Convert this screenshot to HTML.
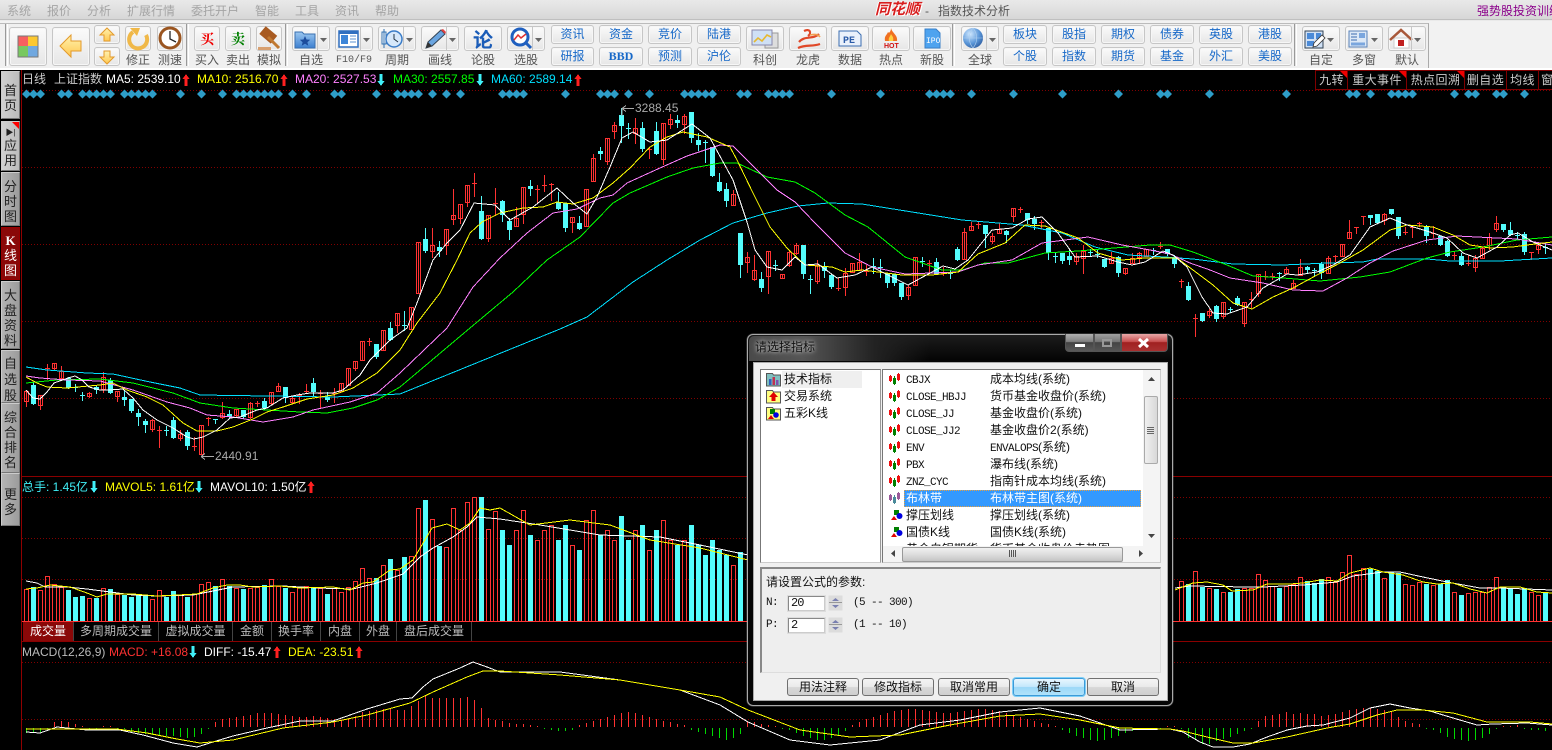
<!DOCTYPE html>
<html><head><meta charset="utf-8"><title>指数技术分析</title>
<style>
html,body{margin:0;padding:0;width:1552px;height:750px;overflow:hidden;background:#000}
body{position:relative;font:12px "Liberation Sans","WenQuanYi Zen Hei","Noto Sans CJK SC",sans-serif}
.t{position:absolute;white-space:nowrap;line-height:14px}
.b{position:absolute;box-sizing:border-box;border:1px solid #c6c6c6;border-radius:3px;background:linear-gradient(#fbfbfb,#e6e6e6);box-shadow:inset 0 0 0 1px #f6f6f6;text-align:center;color:#1668c8;line-height:17px;font-size:12px}
.l{position:absolute;top:53px;line-height:15px;font-size:12px;color:#555;text-align:center;white-space:nowrap;letter-spacing:0}
.s{position:absolute;left:1px;width:19px;box-sizing:border-box;text-align:center;font-size:13px;line-height:15px;color:#222;background:linear-gradient(90deg,#b4b4b4,#9c9c9c);border:1px solid #777;border-top-color:#ccc;border-left-color:#ccc}
.g{position:absolute;background:#e4e4e4;border-left:1px solid #999;border-right:1px solid #fff;top:24px;height:42px}
.tab{position:absolute;top:622px;height:19px;line-height:19px;text-align:center;color:#bbb;font-size:12px;box-sizing:border-box;border-right:1px solid #444}
.tr{position:absolute;top:70px;height:20px;line-height:19px;box-sizing:border-box;border:1px solid #800000;color:#ccc;font-size:12px;letter-spacing:.4px;text-align:center;white-space:nowrap;overflow:hidden;background:#000}
.c{position:absolute;width:0;height:0;border-top:7px solid #f00000;border-left:7px solid transparent;top:0;right:0}
i{font:11px "Liberation Mono",monospace;letter-spacing:-.6px}
.d{position:absolute;left:0;width:300px;height:17px;line-height:17px;font-size:12px;color:#111;white-space:nowrap}
.bt{position:absolute;top:678px;height:18px;box-sizing:border-box;border:1px solid #707070;border-radius:3px;background:linear-gradient(#f4f4f4 0,#ebebeb 48%,#d8d8d8 52%,#cfcfcf 100%);font-size:12px;line-height:16px;text-align:center;color:#111}
.mn{font:11px/14px "Liberation Mono",monospace;letter-spacing:-.6px;color:#111}
</style></head>
<body>
<!-- top menu -->
<div style="position:absolute;left:0;top:0;width:1552px;height:19px;background:linear-gradient(#e9e9e9,#d7d7d7)"></div>
<div class="t" style="left:7px;top:4px;color:#a4a4a4;word-spacing:0">系统</div>
<div class="t" style="left:47px;top:4px;color:#a4a4a4">报价</div>
<div class="t" style="left:87px;top:4px;color:#a4a4a4">分析</div>
<div class="t" style="left:127px;top:4px;color:#a4a4a4">扩展行情</div>
<div class="t" style="left:191px;top:4px;color:#a4a4a4">委托开户</div>
<div class="t" style="left:255px;top:4px;color:#a4a4a4">智能</div>
<div class="t" style="left:295px;top:4px;color:#a4a4a4">工具</div>
<div class="t" style="left:335px;top:4px;color:#a4a4a4">资讯</div>
<div class="t" style="left:375px;top:4px;color:#a4a4a4">帮助</div>
<div class="t" style="left:875px;top:3px;width:46px;color:#d81e1e;font-weight:bold;font-style:italic;font-size:15px;text-shadow:1px 1px 0 #fff,-1px 0 0 #fff;letter-spacing:0">同花顺</div>
<div class="t" style="left:925px;top:4px;color:#555;font-size:12px">-</div>
<div class="t" style="left:938px;top:4px;color:#555;font-size:12px">指数技术分析</div>
<div class="t" style="left:1477px;top:4px;color:#8b008b;font-size:12px">强势股投资训练</div>
<!-- toolbar -->
<div style="position:absolute;left:0;top:19px;width:1552px;height:2px;background:linear-gradient(#aaa,#fff)"></div>
<div style="position:absolute;left:0;top:21px;width:1552px;height:49px;background:#f2f2f2"></div>
<div style="position:absolute;left:0;top:23px;width:1428px;height:45px;background:#f0f0f0;border-top:1px solid #bbb;border-bottom:1px solid #aaa;border-right:1px solid #aaa"></div>
<div style="position:absolute;left:0;top:68px;width:1552px;height:2px;background:#fff"></div>
<div class="g" style="left:5px;width:1px"></div><div class="g" style="left:186px;width:1px"></div><div class="g" style="left:285px;width:1px"></div><div class="g" style="left:952px;width:1px"></div><div class="g" style="left:1294px;width:1px"></div>

<div class="b" style="left:9px;top:27px;width:38px;height:39px"></div>
<div class="b" style="left:52px;top:27px;width:38px;height:39px"></div>
<div class="b" style="left:94px;top:25px;width:26px;height:19px"></div>
<div class="b" style="left:94px;top:47px;width:26px;height:19px"></div>
<div class="b" style="left:125px;top:26px;width:26px;height:25px"></div><div class="l" style="left:125px;width:26px">修正</div>
<div class="b" style="left:157px;top:26px;width:26px;height:25px"></div><div class="l" style="left:157px;width:26px">测速</div>
<div class="b" style="left:194px;top:26px;width:26px;height:25px"></div><div class="l" style="left:194px;width:26px">买入</div>
<div class="b" style="left:225px;top:26px;width:26px;height:25px"></div><div class="l" style="left:225px;width:26px">卖出</div>
<div class="b" style="left:256px;top:26px;width:26px;height:25px"></div><div class="l" style="left:256px;width:26px">模拟</div>
<div class="b" style="left:292px;top:26px;width:38px;height:25px"></div><div class="l" style="left:292px;width:38px">自选</div>
<div class="b" style="left:335px;top:26px;width:38px;height:25px"></div><div class="l" style="left:335px;width:38px;font:10px 'Liberation Mono',monospace;line-height:15px">F10/F9</div>
<div class="b" style="left:378px;top:26px;width:38px;height:25px"></div><div class="l" style="left:378px;width:38px">周期</div>
<div class="b" style="left:421px;top:26px;width:38px;height:25px"></div><div class="l" style="left:421px;width:38px">画线</div>
<div class="b" style="left:464px;top:26px;width:38px;height:25px"></div><div class="l" style="left:464px;width:38px">论股</div>
<div class="b" style="left:507px;top:26px;width:38px;height:25px"></div><div class="l" style="left:507px;width:38px">选股</div>
<div class="b" style="left:551px;top:25px;width:43px;height:19px">资讯</div><div class="b" style="left:551px;top:47px;width:43px;height:19px">研报</div>
<div class="b" style="left:599px;top:25px;width:44px;height:19px">资金</div><div class="b" style="left:599px;top:47px;width:44px;height:19px;font:bold 12px 'Liberation Serif',serif;line-height:17px">BBD</div>
<div class="b" style="left:648px;top:25px;width:44px;height:19px">竞价</div><div class="b" style="left:648px;top:47px;width:44px;height:19px">预测</div>
<div class="b" style="left:697px;top:25px;width:44px;height:19px">陆港</div><div class="b" style="left:697px;top:47px;width:44px;height:19px">沪伦</div>
<div class="b" style="left:746px;top:26px;width:38px;height:25px"></div><div class="l" style="left:746px;width:38px">科创</div>
<div class="b" style="left:789px;top:26px;width:38px;height:25px"></div><div class="l" style="left:789px;width:38px">龙虎</div>
<div class="b" style="left:831px;top:26px;width:38px;height:25px"></div><div class="l" style="left:831px;width:38px">数据</div>
<div class="b" style="left:872px;top:26px;width:38px;height:25px"></div><div class="l" style="left:872px;width:38px">热点</div>
<div class="b" style="left:913px;top:26px;width:38px;height:25px"></div><div class="l" style="left:913px;width:38px">新股</div>
<div class="b" style="left:961px;top:26px;width:38px;height:25px"></div><div class="l" style="left:961px;width:38px">全球</div>
<div class="b" style="left:1003px;top:25px;width:44px;height:19px">板块</div><div class="b" style="left:1003px;top:47px;width:44px;height:19px">个股</div>
<div class="b" style="left:1052px;top:25px;width:44px;height:19px">股指</div><div class="b" style="left:1052px;top:47px;width:44px;height:19px">指数</div>
<div class="b" style="left:1101px;top:25px;width:44px;height:19px">期权</div><div class="b" style="left:1101px;top:47px;width:44px;height:19px">期货</div>
<div class="b" style="left:1150px;top:25px;width:44px;height:19px">债券</div><div class="b" style="left:1150px;top:47px;width:44px;height:19px">基金</div>
<div class="b" style="left:1199px;top:25px;width:44px;height:19px">英股</div><div class="b" style="left:1199px;top:47px;width:44px;height:19px">外汇</div>
<div class="b" style="left:1248px;top:25px;width:44px;height:19px">港股</div><div class="b" style="left:1248px;top:47px;width:44px;height:19px">美股</div>
<div class="b" style="left:1302px;top:26px;width:38px;height:25px"></div><div class="l" style="left:1302px;width:38px">自定</div>
<div class="b" style="left:1345px;top:26px;width:38px;height:25px"></div><div class="l" style="left:1345px;width:38px">多窗</div>
<div class="b" style="left:1388px;top:26px;width:38px;height:25px"></div><div class="l" style="left:1388px;width:38px">默认</div>

<svg width="1552" height="70" style="position:absolute;left:0;top:0">
<defs>
<linearGradient id="yl" x1="0" y1="0" x2="0" y2="1"><stop offset="0" stop-color="#fff2b0"/><stop offset="1" stop-color="#ffc850"/></linearGradient>
<linearGradient id="bl" x1="0" y1="0" x2="0" y2="1"><stop offset="0" stop-color="#9cc8f0"/><stop offset="1" stop-color="#3c7fd0"/></linearGradient>
<radialGradient id="gb" cx=".35" cy=".3" r=".8"><stop offset="0" stop-color="#d0e8ff"/><stop offset=".6" stop-color="#5a96d8"/><stop offset="1" stop-color="#2c5a9c"/></radialGradient>
</defs>
<!-- grid icon -->
<rect x="18" y="36" width="10" height="10" fill="#f66060"/><rect x="28" y="36" width="10" height="10" fill="#fcc830"/><rect x="18" y="46" width="10" height="11" fill="#78c860"/><rect x="28" y="46" width="10" height="11" fill="#70a8e0"/><rect x="18" y="36" width="20" height="21" fill="none" stroke="#777"/>
<path d="M60 46 71 35V41H81V51H71V57Z" fill="url(#yl)" stroke="#e39a2c"/>
<path d="M107 28 114 35H110V41H104V35H100Z" fill="url(#yl)" stroke="#e39a2c"/>
<path d="M107 64 100 57H104V51H110V57H114Z" fill="url(#yl)" stroke="#e39a2c"/>
<path d="M133 32A9 9 0 1 0 146 35" fill="none" stroke="#f0b848" stroke-width="4"/><path d="M130 28l10 0-3 8z" fill="#f0b848"/>
<circle cx="170" cy="38" r="10" fill="#fff" stroke="#9a5520" stroke-width="3"/><path d="M170 31V39L176 42" fill="none" stroke="#222" stroke-width="1.3"/>
<text x="200" y="44" font-size="14" font-weight="bold" font-family="Noto Serif CJK SC,serif" fill="#f00000">买</text><text x="231" y="44" font-size="14" font-weight="bold" font-family="Noto Serif CJK SC,serif" fill="#008000">卖</text>
<g transform="rotate(40 268 36)"><rect x="260" y="30" width="15" height="10" fill="#a85a20"/></g><path d="M268 37 279 48" stroke="#c07830" stroke-width="3"/><rect x="258" y="47" width="13" height="3" fill="#d8a070"/>
<path d="M295 32h7l2 2h11v14h-20z" fill="url(#bl)" stroke="#3a70b0"/><path d="M305 36l1.5 3.5 3.7.3-2.8 2.4.9 3.6-3.3-2-3.3 2 .9-3.6-2.8-2.4 3.7-.3z" fill="#1c4c9c"/>
<path d="M320 38h7l-3.5 4z" fill="#666"/><path d="M317.5 26V51" stroke="#c6c6c6"/>
<rect x="339" y="31" width="19" height="16" fill="#fff" stroke="#2f6fc0" stroke-width="1.5"/><rect x="341" y="35" width="7" height="9" fill="#3c85d8"/><path d="M350 36h6M350 39h6M350 42h6" stroke="#5a90d0"/><rect x="339" y="31" width="19" height="3" fill="#2f6fc0"/>
<path d="M363 38h7l-3.5 4z" fill="#666"/><path d="M360.5 26V51" stroke="#c6c6c6"/>
<rect x="382" y="32" width="4" height="12" fill="#fff" stroke="#3070b0"/><path d="M384 29V48" stroke="#3070b0"/><circle cx="394" cy="39" r="8" fill="#d6e8fa" stroke="#3a7cc8" stroke-width="1.5"/><path d="M394 34V39L398 42" fill="none" stroke="#234" />
<path d="M406 38h7l-3.5 4z" fill="#666"/><path d="M403.5 26V51" stroke="#c6c6c6"/>
<path d="M426 48l2-6 13-12 4 4-13 12z" fill="#6aa5e0" stroke="#345"/><path d="M441 30l4 4 1-2-3-3z" fill="#e04040"/><path d="M426 48l2-6 4 4z" fill="#333"/>
<path d="M449 38h7l-3.5 4z" fill="#666"/><path d="M446.5 26V51" stroke="#c6c6c6"/>
<text x="473" y="47" font-size="20" font-weight="bold" fill="#1a5cb8">论</text>
<circle cx="520" cy="37" r="8" fill="#fff" stroke="#1f5fbf" stroke-width="3"/><path d="M514 40 518 35 521 38 526 34" fill="none" stroke="#e03030" stroke-width="1.5"/><path d="M526 43 531 48" stroke="#1f5fbf" stroke-width="3"/>
<path d="M535 38h7l-3.5 4z" fill="#666"/><path d="M532.5 26V51" stroke="#c6c6c6"/>
<rect x="765" y="33" width="13" height="15" fill="#ddd" stroke="#999"/><rect x="752" y="30" width="20" height="15" fill="#cfe0f5" stroke="#88a"/><path d="M754 42 758 38 762 41 767 35 771 37" fill="none" stroke="#e6b830" stroke-width="1.6"/>
<path d="M799 42c6-7 14-2 20-8M804 31c6-3 8 2 4 5M798 48c8-4 14-1 22-4" fill="none" stroke="#e04828" stroke-width="2.2"/><path d="M810 35c4-1 8-1 10 2" fill="none" stroke="#f0a050" stroke-width="1.6"/>
<path d="M839 31h18l4 4v11h-22z" fill="#eaf1fb" stroke="#3b6db0"/><text x="843" y="43" font-size="10" font-weight="bold" font-family="Liberation Mono" fill="#2c5ca8">PE</text>
<path d="M891 28c1 5 7 7 6 13h-12c-1-5 2-6 3-9 1 2 3-1 3-4z" fill="#f07020"/><path d="M891 34c1 2 3 3 2 7h-4c-1-3 1-4 2-7z" fill="#ffd040"/><text x="884" y="48" font-size="7" font-weight="bold" fill="#d01010">HOT</text>
<path d="M925 29h11l4 4v15h-15z" fill="#4ea3ef" stroke="#3a80c8"/><text x="926" y="43" font-size="8" font-family="Liberation Mono" fill="#fff">IPO</text>
<circle cx="973" cy="38" r="10" fill="url(#gb)"/><path d="M963 38h20M973 28c-5 6-5 14 0 20M973 28c5 6 5 14 0 20" fill="none" stroke="#b0d0f0" stroke-width=".6"/>
<path d="M989 38h7l-3.5 4z" fill="#666"/><path d="M986.5 26V51" stroke="#c6c6c6"/>
<rect x="1305" y="31" width="18" height="17" fill="#cfe0f5" stroke="#345"/><rect x="1307" y="33" width="7" height="6" fill="#4a8ad8"/><rect x="1316" y="33" width="5" height="6" fill="#4a8ad8"/><rect x="1307" y="41" width="7" height="5" fill="#4a8ad8"/><path d="M1313 47l1-4 8-8 3 3-8 8z" fill="#fff" stroke="#333" stroke-width=".8"/>
<path d="M1327 38h7l-3.5 4z" fill="#666"/>
<rect x="1349" y="31" width="18" height="16" fill="#dce8f6" stroke="#5a82b8"/><path d="M1351 34h6M1351 37h6M1351 40h6" stroke="#3c6cb0"/><rect x="1359" y="33" width="6" height="5" fill="#7aa6de"/><path d="M1351 44h14" stroke="#7aa6de" stroke-width="3"/>
<path d="M1371 38h7l-3.5 4z" fill="#666"/>
<rect x="1394" y="38" width="15" height="10" fill="#fff" stroke="#ccc"/><path d="M1390 40l11-10 11 10" fill="none" stroke="#a8583a" stroke-width="2.5"/><rect x="1398" y="40" width="6" height="6" fill="#c02020"/>
<path d="M1414 38h7l-3.5 4z" fill="#666"/><path d="M1411.5 26V51" stroke="#c6c6c6"/>
</svg>

<!-- chart -->
<svg id="ch" width="1552" height="680" viewBox="0 70 1552 680" style="position:absolute;left:0;top:70px;shape-rendering:crispEdges" fill="none">
<path d="M21.5 70V750" stroke="#900000"/>
<path d="M22 90.5H1552M22 167.5H1552M22 244.5H1552M22 321.5H1552M22 398.5H1552M22 497.5H1552M22 538.5H1552M22 579.5H1552M22 662.5H1552M22 719.5H1552" stroke="#800000" stroke-dasharray="1 2"/>
<path d="M22 476.5H1552M22 641.5H1552" stroke="#8a0000"/>
<path d="M22 621.5H1552" stroke="#ff3232"/>
<g id="cd"></g>
<polyline stroke="#00e0ff" points="26,367 47,370 87,373 113,374 150,382 180,388 200,395 267,396 333,397 400,394 560,329 587,317 633,282 667,260 700,240 733,223 767,213 798,206 828,203 862,204 912,212 962,220 1022,225 1062,233 1095,247 1128,255 1165,257 1193,259 1233,264 1283,265 1327,263 1363,262 1377,259 1427,259 1450,261 1500,261 1552,258"/>
<polyline stroke="#00ff00" points="26,383 57,380 100,379 133,383 173,393 200,403 233,408 267,410 300,412 327,413 353,408 377,400 400,387 470,328 513,292 547,260 580,237 613,203 630,193 667,177 693,168 720,163 737,163 767,177 795,182 815,193 845,215 868,227 905,257 942,270 962,270 985,263 1008,263 1045,253 1078,251 1150,245 1170,245 1193,252 1227,265 1253,276 1283,278 1320,281 1360,277 1390,272 1427,258 1450,252 1483,247 1517,240 1552,237"/>
<polyline stroke="#ff80ff" points="26,376 40,378 67,380 100,381 133,390 167,402 190,408 207,415 233,417 263,422 293,417 313,410 350,402 377,393 400,373 447,328 473,287 500,258 527,233 553,213 577,209 600,198 613,195 627,183 660,168 687,156 720,145 733,146 757,170 777,190 795,202 815,223 845,253 872,267 905,274 958,272 978,265 1012,260 1042,243 1088,237 1122,245 1150,250 1170,254 1190,263 1210,270 1230,278 1263,283 1293,290 1323,291 1347,278 1370,263 1393,251 1427,240 1457,236 1517,239 1552,245"/>
<polyline stroke="#ffff00" points="26,377 37,383 47,387 67,388 100,385 113,383 127,390 147,397 163,405 183,423 197,431 217,431 233,427 253,419 267,412 283,407 307,399 333,395 353,388 377,373 400,350 417,323 440,293 457,260 470,233 482,222 500,213 523,208 543,207 557,202 573,204 593,198 613,183 630,168 650,147 667,137 683,132 707,137 730,147 737,160 753,193 770,227 787,248 805,265 832,267 845,272 862,270 902,275 932,275 958,272 978,254 1005,243 1025,225 1045,226 1078,238 1098,253 1122,260 1145,258 1177,258 1193,270 1213,285 1233,303 1252,309 1273,297 1293,288 1317,275 1340,263 1363,250 1390,230 1407,225 1433,227 1453,235 1470,245 1490,248 1513,247 1527,245 1552,242"/>
<polyline stroke="#ffffff" points="26,390 33,398 40,399 47,392 54,383 68,378 75,376 82,380 89,387 100,390 110,390 123,389 133,398 143,410 157,420 173,428 187,437 194,439 203,437 217,430 230,418 240,417 257,410 267,408 283,398 297,395 310,393 333,393 343,390 360,375 370,360 383,347 390,340 407,328 417,303 433,260 447,243 460,230 474,203 495,205 510,220 533,207 557,188 573,203 587,214 597,197 610,167 622,138 633,132 650,142 667,140 692,124 710,138 733,180 747,222 755,250 767,267 782,270 795,257 805,265 818,264 837,278 855,275 872,267 892,277 908,285 932,272 943,266 955,269 968,260 992,230 1012,228 1028,219 1042,217 1058,233 1075,257 1098,256 1118,262 1132,265 1145,262 1163,251 1173,255 1187,267 1202,297 1213,313 1227,314 1247,307 1263,288 1287,274 1297,275 1317,272 1333,265 1350,255 1370,227 1390,218 1407,225 1430,232 1447,238 1463,253 1477,258 1497,247 1510,235 1518,233 1533,242 1552,250"/>
<!-- volume averages -->
<polyline stroke="#ffffff" points="26,581 37,583 45,587 67,587 87,589 110,592 133,595 157,596 193,595 213,591 233,587 283,586 317,588 353,589 377,583 403,574 420,557 433,548 453,537 467,527 477,517 500,519 540,525 600,535 660,537 700,545 748,555"/>
<polyline stroke="#ffff00" points="26,589 37,588 50,585 70,587 87,593 97,597 107,594 133,594 157,596 197,594 213,588 227,585 240,585 253,587 280,586 300,588 333,587 350,590 363,583 373,582 390,570 400,569 413,560 432,528 447,524 460,530 470,523 480,508 490,510 500,508 530,525 570,520 610,525 650,540 700,548 748,560"/>
<polyline stroke="#ffffff" points="1175,588 1190,586 1247,587 1263,587 1303,585 1337,582 1353,576 1383,572 1400,572 1423,577 1447,582 1480,588 1500,588 1552,590"/>
<polyline stroke="#ffff00" points="1175,590 1180,588 1193,583 1207,582 1223,585 1232,591 1253,590 1267,584 1290,584 1303,583 1320,580 1337,581 1350,573 1370,568 1383,572 1403,575 1423,582 1437,584 1453,583 1470,589 1487,593 1500,587 1520,587 1537,592 1552,593"/>
<!-- MACD lines -->
<polyline stroke="#ffffff" points="26,732 40,733 57,727 87,730 120,730 143,735 173,743 197,747 213,742 233,736 267,728 300,721 333,721 367,709 400,699 412,698 423,687 433,679 460,668 473,662 487,667 500,672 560,672 620,680 680,690 720,705 748,722 790,740 830,745 880,740 920,725 960,720 1000,712 1040,708 1080,716 1120,730 1170,729 1183,732 1200,742 1213,747 1233,747 1250,744 1267,737 1287,730 1307,726 1323,725 1350,718 1370,708 1390,704 1410,708 1430,711 1453,718 1477,725 1493,724 1527,723 1552,725"/>
<polyline stroke="#ffff00" points="26,729 63,729 117,729 147,733 177,739 200,743 233,740 283,728 333,722 367,715 410,703 433,692 467,677 483,671 500,671 560,675 620,680 680,690 720,697 748,710 800,730 850,737 900,735 950,725 1000,716 1040,714 1080,720 1120,728 1170,729 1183,731 1207,737 1233,743 1253,743 1287,737 1327,728 1350,724 1377,715 1397,710 1423,710 1453,713 1487,722 1530,722 1552,724"/>
<!-- header arrows -->
<g fill="#ff2020" stroke="none">
<path d="M186 74l3.500 5h-2v7h-3v-7h-2z"/><path d="M284 74l3.500 5h-2v7h-3v-7h-2z"/><path d="M578 74l3.500 5h-2v7h-3v-7h-2z"/>
<path d="M311 481l3.500 5h-2v7h-3v-7h-2z"/><path d="M277 646l3.500 5h-2v7h-3v-7h-2z"/><path d="M359 646l3.500 5h-2v7h-3v-7h-2z"/>
</g>
<g fill="#40f0f8" stroke="none">
<path d="M381 86l-3.500-5h2v-7h3v7h2z"/><path d="M480 86l-3.500-5h2v-7h3v7h2z"/><path d="M94 493l-3.500-5h2v-7h3v7h2z"/><path d="M199 493l-3.500-5h2v-7h3v7h2z"/><path d="M193 658l-3.500-5h2v-7h3v7h2z"/>
</g>
<path d="M622 108.500H634M622 108.500l4-3M622 108.500l4 3M622 108V116" stroke="#aaa"/>
<path d="M201 456.500H214M201 456.500l4-3M201 456.500l4 3" stroke="#aaa"/>
</svg>

<!-- chart header text -->
<div class="t" style="left:22px;top:72px;color:#ccc;font-size:12px">日线</div>
<div class="t" style="left:54px;top:72px;color:#ccc;font-size:12px">上证指数</div>
<div class="t" style="left:106px;top:72px;color:#fff">MA5: 2539.10</div>
<div class="t" style="left:197px;top:72px;color:#ff0">MA10: 2516.70</div>
<div class="t" style="left:295px;top:72px;color:#ff80ff">MA20: 2527.53</div>
<div class="t" style="left:393px;top:72px;color:#0f0">MA30: 2557.85</div>
<div class="t" style="left:491px;top:72px;color:#00e0ff">MA60: 2589.14</div>
<div class="t" style="left:635px;top:101px;color:#aaa">3288.45</div>
<div class="t" style="left:215px;top:449px;color:#aaa">2440.91</div>
<div class="t" style="left:22px;top:480px;color:#40f0f8">总手: 1.45亿</div>
<div class="t" style="left:105px;top:480px;color:#ff0">MAVOL5: 1.61亿</div>
<div class="t" style="left:210px;top:480px;color:#fff">MAVOL10: 1.50亿</div>
<div class="t" style="left:22px;top:645px;color:#bbb">MACD(12,26,9)</div>
<div class="t" style="left:109px;top:645px;color:#ff3232">MACD: +16.08</div>
<div class="t" style="left:204px;top:645px;color:#fff">DIFF: -15.47</div>
<div class="t" style="left:288px;top:645px;color:#ff0">DEA: -23.51</div>

<!-- right tabs -->
<div class="tr" style="left:1315px;width:33px">九转<span class="c"></span></div>
<div class="tr" style="left:1347px;width:60px">重大事件<span class="c"></span></div>
<div class="tr" style="left:1406px;width:59px">热点回溯<span class="c"></span></div>
<div class="tr" style="left:1464px;width:43px">删自选</div>
<div class="tr" style="left:1506px;width:33px">均线</div>
<div class="tr" style="left:1538px;width:30px;text-align:left;padding-left:2px">窗口</div>

<!-- sidebar -->
<div class="s" style="top:71px;height:48px;padding-top:11px;background:linear-gradient(90deg,#d0d0d0,#bcbcbc)">首<br>页</div>
<div class="s" style="top:121px;height:50px;padding-top:5px;background:linear-gradient(90deg,#d0d0d0,#bcbcbc)"><span style="font-size:8px;line-height:11px;display:block">&#9654;|</span>应<br>用<span style="position:absolute;right:0;top:0;border-top:7px solid #f00;border-left:7px solid transparent"></span></div>
<div class="s" style="top:172px;height:54px;padding-top:6px">分<br>时<br>图</div>
<div class="s" style="top:227px;height:53px;padding-top:5px;background:#8a0808;color:#fff;border-color:#900"><b style="font-family:'Liberation Serif',serif">K</b><br>线<br>图</div>
<div class="s" style="top:281px;height:68px;padding-top:6px">大<br>盘<br>资<br>料</div>
<div class="s" style="top:350px;height:53px;padding-top:5px;line-height:16px">自<br>选<br>股</div>
<div class="s" style="top:403px;height:70px;padding-top:6px">综<br>合<br>排<br>名</div>
<div class="s" style="top:473px;height:53px;padding-top:13px">更<br>多</div>

<!-- volume tabs -->
<div class="tab" style="left:23px;width:51px;background:#8a0808;color:#fff">成交量</div>
<div class="tab" style="left:74px;width:85px">多周期成交量</div>
<div class="tab" style="left:159px;width:74px">虚拟成交量</div>
<div class="tab" style="left:233px;width:39px">金额</div>
<div class="tab" style="left:272px;width:49px">换手率</div>
<div class="tab" style="left:321px;width:39px">内盘</div>
<div class="tab" style="left:360px;width:37px">外盘</div>
<div class="tab" style="left:397px;width:75px">盘后成交量</div>

<!-- dialog -->
<div style="position:absolute;left:747px;top:334px;width:426px;height:372px;box-sizing:border-box;border:1px solid #aaa;border-radius:6px;background:linear-gradient(#1c1c1c,#050505 25px,#050505 100%);box-shadow:0 0 1px #fff"></div>
<div style="position:absolute;left:749px;top:336px;width:180px;height:25px;background:linear-gradient(90deg,#4a4a4a,#555 30%,#222 70%,transparent);border-radius:5px 0 0 0"></div>
<div class="t" style="left:755px;top:340px;color:#111;font-size:12px;text-shadow:0 0 6px #bbb,0 0 3px #bbb">请选择指标</div>
<div style="position:absolute;left:1065px;top:334px;width:29px;height:18px;box-sizing:border-box;border:1px solid #555;border-top:0;border-radius:0 0 0 4px;background:linear-gradient(#b0b0b0,#808080 45%,#444 50%,#5a5a5a)"></div>
<div style="position:absolute;left:1075px;top:344px;width:10px;height:3px;background:#fff"></div>
<div style="position:absolute;left:1094px;top:334px;width:27px;height:18px;box-sizing:border-box;border:1px solid #555;border-top:0;background:linear-gradient(#a0a0a0,#777 45%,#444 50%,#555)"></div>
<div style="position:absolute;left:1102px;top:339px;width:10px;height:8px;box-sizing:border-box;border:2px solid #999"></div>
<div style="position:absolute;left:1121px;top:334px;width:47px;height:18px;box-sizing:border-box;border:1px solid #555;border-top:0;border-radius:0 0 4px 0;background:linear-gradient(#e8a8a8,#c85050 45%,#a02020 50%,#a83030)"></div>
<svg width="14" height="12" style="position:absolute;left:1137px;top:337px"><path d="M2 2 11 10M11 2 2 10" stroke="#fff" stroke-width="3"/></svg>
<div style="position:absolute;left:753px;top:362px;width:415px;height:339px;box-sizing:border-box;border:1px solid #aaa;background:#f0f0f0"></div>

<!-- tree box -->
<div style="position:absolute;left:760px;top:369px;width:121px;height:194px;box-sizing:border-box;border:1px solid #777;border-right-color:#999;border-bottom-color:#ccc;background:#fff"></div>
<div style="position:absolute;left:782px;top:371px;width:80px;height:17px;background:#efefef"></div>
<div class="t" style="left:784px;top:372px;font-size:12px;color:#111">技术指标</div>
<div class="t" style="left:784px;top:389px;font-size:12px;color:#111">交易系统</div>
<div class="t" style="left:784px;top:406px;font-size:12px;color:#111">五彩K线</div>
<svg width="18" height="52" style="position:absolute;left:765px;top:370px">
<path d="M1.500 3.500h6l1 1.500h7v11h-14z" fill="#7fc0c0" stroke="#555"/><rect x="4" y="9" width="2.500" height="6" fill="#3060c0"/><rect x="7.500" y="7" width="2.500" height="8" fill="#c03050"/><rect x="11" y="10" width="2.500" height="5" fill="#8050b0"/>
<path d="M1.500 20.500h6l1 1.500h7v11h-14z" fill="#ffff80" stroke="#555"/><path d="M8.500 22 13 27h-2.500v4h-4v-4H4z" fill="#e00000"/>
<path d="M1.500 37.500h6l1 1.500h7v11h-14z" fill="#ffff80" stroke="#555"/><rect x="5" y="39" width="5" height="5" fill="#008000"/><circle cx="11" cy="45" r="2.800" fill="#0000e0"/><path d="M3 49l3-4 3 4z" fill="#e00000"/>
</svg>

<!-- list box -->
<div style="position:absolute;left:882px;top:369px;width:279px;height:194px;box-sizing:border-box;border:1px solid #777;border-right-color:#ccc;border-bottom-color:#ccc;background:#fff"></div>
<div style="position:absolute;left:883px;top:370px;width:260px;height:176px;overflow:hidden">
<div style="position:absolute;left:21px;top:120px;width:237px;height:17px;box-sizing:border-box;background:#3399ff;border:1px dotted #e8a040"></div>
<div class="d" style="top:1px"><span style="position:absolute;left:23px"><i>CBJX</i></span><span style="position:absolute;left:107px">成本均线(系统)</span></div>
<div class="d" style="top:18px"><span style="position:absolute;left:23px"><i>CLOSE_HBJJ</i></span><span style="position:absolute;left:107px">货币基金收盘价(系统)</span></div>
<div class="d" style="top:35px"><span style="position:absolute;left:23px"><i>CLOSE_JJ</i></span><span style="position:absolute;left:107px">基金收盘价(系统)</span></div>
<div class="d" style="top:52px"><span style="position:absolute;left:23px"><i>CLOSE_JJ2</i></span><span style="position:absolute;left:107px">基金收盘价2(系统)</span></div>
<div class="d" style="top:69px"><span style="position:absolute;left:23px"><i>ENV</i></span><span style="position:absolute;left:107px"><i>ENVALOPS</i>(系统)</span></div>
<div class="d" style="top:86px"><span style="position:absolute;left:23px"><i>PBX</i></span><span style="position:absolute;left:107px">瀑布线(系统)</span></div>
<div class="d" style="top:103px"><span style="position:absolute;left:23px"><i>ZNZ_CYC</i></span><span style="position:absolute;left:107px">指南针成本均线(系统)</span></div>
<div class="d" style="top:120px;color:#fff"><span style="position:absolute;left:23px">布林带</span><span style="position:absolute;left:107px">布林带主图(系统)</span></div>
<div class="d" style="top:137px"><span style="position:absolute;left:23px">撑压划线</span><span style="position:absolute;left:107px">撑压划线(系统)</span></div>
<div class="d" style="top:154px"><span style="position:absolute;left:23px">国债K线</span><span style="position:absolute;left:107px">国债K线(系统)</span></div>
<div class="d" style="top:171px"><span style="position:absolute;left:23px">黄金白银期货</span><span style="position:absolute;left:107px">货币基金收盘价走势图</span></div>
<svg width="20" height="176" style="position:absolute;left:5px;top:0">
<defs><g id="k"><path d="M2.500 2V9" stroke="#e01010"/><rect x="1" y="3" width="3" height="5" fill="#f01010"/><path d="M6.500 3V12" stroke="#008000"/><rect x="5" y="5" width="3" height="6" fill="#008000"/><path d="M10.500 0V8" stroke="#e01010"/><rect x="9" y="1" width="3" height="6" fill="#f01010"/></g>
<g id="m"><rect x="6" y="0" width="5" height="5" fill="#008000"/><circle cx="11.500" cy="6" r="3" fill="#0000e0"/><path d="M3 10l3-4 3 4z" fill="#e00000"/></g></defs>
<use href="#k" y="3"/><use href="#k" y="20"/><use href="#k" y="37"/><use href="#k" y="54"/><use href="#k" y="71"/><use href="#k" y="88"/><use href="#k" y="105"/>
<g transform="translate(0 122)"><path d="M2.500 2V9M10.500 0V8" stroke="#9a5a9a"/><rect x="1" y="3" width="3" height="5" fill="#9a5a9a"/><path d="M6.500 3V12" stroke="#4a8a9a"/><rect x="5" y="5" width="3" height="6" fill="#4a8a9a"/><rect x="9" y="1" width="3" height="6" fill="#9a5a9a"/></g>
<use href="#m" y="140"/><use href="#m" y="157"/>
</svg>
</div>
<!-- scrollbars -->
<div style="position:absolute;left:1143px;top:370px;width:17px;height:176px;background:#f4f4f4"></div>
<svg width="17" height="192" style="position:absolute;left:1143px;top:370px"><path d="M5 11h7l-3.500-4z" fill="#444"/><path d="M5 164h7l-3.500 4z" fill="#444"/></svg>
<div style="position:absolute;left:1144px;top:396px;width:14px;height:68px;box-sizing:border-box;border:1px solid #aaa;border-radius:2px;background:linear-gradient(90deg,#f0f0f0,#d8d8d8)"></div>
<svg width="14" height="10" style="position:absolute;left:1144px;top:426px"><path d="M3 1.500h7M3 3.500h7M3 5.500h7M3 7.500h7" stroke="#666"/></svg>
<div style="position:absolute;left:883px;top:546px;width:277px;height:16px;background:#f4f4f4"></div>
<svg width="277" height="16" style="position:absolute;left:883px;top:546px"><path d="M12 4v7l-4-3.500z" fill="#444"/><path d="M256 4v7l4-3.500z" fill="#444"/></svg>
<div style="position:absolute;left:902px;top:547px;width:221px;height:15px;box-sizing:border-box;border:1px solid #999;border-radius:2px;background:linear-gradient(#f0f0f0,#ddd 50%,#c4c4c4)"></div>
<svg width="12" height="10" style="position:absolute;left:1007px;top:549px"><path d="M2.500 1v7M4.500 1v7M6.500 1v7M8.500 1v7" stroke="#555"/></svg>

<!-- params -->
<div style="position:absolute;left:760px;top:567px;width:401px;height:106px;box-sizing:border-box;border:1px solid #ddd;border-top:2px solid #888;border-left:2px solid #888;background:#eee"></div>
<div class="t" style="left:766px;top:575px;color:#111;font-size:12px">请设置公式的参数:</div>
<div class="t mn" style="left:766px;top:596px">N:</div>
<div style="position:absolute;left:788px;top:596px;width:37px;height:15px;box-sizing:border-box;border:1px solid #888;border-right-color:#ccc;border-bottom-color:#ccc;background:#fff;font:12px/13px 'Liberation Mono',monospace;letter-spacing:-1px;padding-left:2px;color:#111;outline:1px solid #ddd">20</div>
<svg width="16" height="16" style="position:absolute;left:828px;top:595px"><rect width="15" height="16" fill="#dcdcdc" stroke="#eee"/><path d="M4 6h7l-3.500-3z" fill="#7a80b0"/><path d="M4 10h7l-3.500 3z" fill="#7a80b0"/><path d="M1 7.500h13" stroke="#999"/></svg>
<div class="t mn" style="left:853px;top:596px">(5 -- 300)</div>
<div class="t mn" style="left:766px;top:618px">P:</div>
<div style="position:absolute;left:788px;top:618px;width:37px;height:15px;box-sizing:border-box;border:1px solid #888;border-right-color:#ccc;border-bottom-color:#ccc;background:#fff;font:12px/13px 'Liberation Mono',monospace;padding-left:2px;color:#111;outline:1px solid #ddd">2</div>
<svg width="16" height="16" style="position:absolute;left:828px;top:617px"><rect width="15" height="16" fill="#dcdcdc" stroke="#eee"/><path d="M4 6h7l-3.500-3z" fill="#7a80b0"/><path d="M4 10h7l-3.500 3z" fill="#7a80b0"/><path d="M1 7.500h13" stroke="#999"/></svg>
<div class="t mn" style="left:853px;top:618px">(1 -- 10)</div>

<div class="bt" style="left:787px;width:72px">用法注释</div>
<div class="bt" style="left:862px;width:72px">修改指标</div>
<div class="bt" style="left:938px;width:72px">取消常用</div>
<div class="bt" style="left:1013px;width:72px;border-color:#3c9ad8;background:linear-gradient(#e8f6fe,#c4e8fc 48%,#9cd8f8 52%,#b0e2fa);box-shadow:0 0 0 1px #7fd0f8">确定</div>
<div class="bt" style="left:1087px;width:72px">取消</div>

<script>
var D="r390,391,401,406 c382,385,404,404 r395,395,405,409 r364,368,370,379 r363,363,368,370 r366,371,378,380 c377,378,388,388 c384,387,388,391 c392,395,397,400 r392,393,396,397 c386,387,390,393 r372,377,389,392 c378,380,393,393 r391,391,396,401 c391,397,400,405 c399,399,411,412 c409,413,417,425 c419,421,425,432 r419,420,429,431 r426,430,431,447 c426,430,431,435 c417,420,438,438 r430,434,438,440 c430,432,446,449 r437,446,447,450 r425,425,454,454 r417,418,419,425 c419,419,421,423 r402,413,417,418 c410,414,417,418 r409,409,415,416 c410,410,417,418 r402,403,417,418 r401,403,404,406 c398,401,408,409 r392,392,403,404 r383,386,391,391 c387,387,398,402 r397,398,402,403 r393,395,397,403 r384,391,393,393 c378,383,392,395 r390,393,394,407 c392,397,400,401 r388,393,394,402 r383,383,391,391 r368,368,385,385 r361,361,368,370 r341,341,360,360 r338,341,343,345 c344,344,357,358 r330,330,350,350 c322,328,340,340 r313,313,325,332 c311,325,327,330 r307,307,329,329 r242,242,293,293 c228,239,251,252 r228,245,251,257 c241,247,251,256 r229,229,245,254 r189,215,219,224 r204,204,218,223 r185,185,202,206 r173,183,184,196 c196,211,239,239 r215,215,238,241 r188,203,205,215 c200,201,215,221 c218,221,230,239 r207,218,226,226 r187,187,214,223 c180,186,189,195 r185,189,191,203 r175,185,187,191 r183,184,185,200 c192,202,209,209 c203,203,228,231 r217,217,222,232 c216,223,229,229 r189,189,226,226 r154,158,181,181 c147,151,154,159 r138,138,161,164 r122,125,131,138 c108,115,126,142 c123,128,129,138 r118,128,133,143 c122,128,149,151 r147,149,150,158 c122,131,154,154 r123,123,159,164 r114,119,124,128 c115,120,123,127 r114,116,124,133 c112,112,138,142 c133,140,145,150 c140,142,143,162 c147,147,176,176 c173,182,191,191 c183,189,201,206 r190,194,205,205 c233,233,265,277 r252,257,262,272 r255,270,279,280 c272,279,288,291 r251,251,276,293 c260,265,266,270 r274,274,278,278 r251,252,265,266 r243,245,253,254 c245,245,274,278 c275,279,280,293 r260,265,281,283 c262,266,271,277 c274,275,287,288 r278,288,289,290 r268,273,287,295 r263,263,272,272 r253,262,270,270 r265,271,272,275 c258,266,267,273 c259,267,268,277 c273,273,283,287 c274,274,283,285 c283,283,297,299 r285,287,295,299 r257,257,285,285 c257,261,263,266 r260,263,264,273 c258,262,274,274 r267,273,274,275 c270,273,274,278 c247,249,260,260 r228,232,259,259 r222,226,230,230 r222,224,225,228 c225,225,234,247 r233,236,241,243 r223,229,233,233 c230,231,235,242 r208,208,216,221 r207,209,210,212 c213,213,220,223 c216,219,224,229 r220,222,224,228 c228,228,253,259 c253,256,257,262 c253,253,261,263 c250,256,260,264 r253,256,261,264 r245,251,258,273 c249,252,253,256 c249,254,255,257 c259,259,267,267 r252,258,263,263 c256,257,273,276 r268,268,273,274 r253,258,263,263 r252,253,257,263 r249,249,256,256 c248,250,251,254 r242,246,248,248 c249,249,254,255 c255,258,264,267 r279,281,282,287 c282,286,300,300 r314,318,319,336 c313,313,321,321 r309,311,315,317 c305,306,319,321 r302,302,316,318 c307,309,310,312 c296,298,305,305 r302,302,323,326 r292,299,301,307 r274,274,293,296 r271,276,277,279 r273,276,277,279 c272,273,274,280 r267,269,273,273 r280,283,288,288 r259,267,275,275 c266,267,270,272 c268,270,271,276 c262,264,273,278 r256,258,273,273 r255,256,257,261 r244,244,256,256 r220,232,238,238 r227,227,228,233 r216,216,217,224 c215,215,218,224 c214,214,223,223 r213,214,220,224 c209,209,214,214 c217,217,236,238 r227,232,233,234 r227,227,228,237 r222,223,224,226 c225,227,236,242 r226,233,235,237 c236,236,245,245 c240,241,256,256 r252,255,256,259 c253,256,265,265 r255,263,265,265 r255,258,267,271 r247,248,258,258 r233,237,245,249 r216,223,229,231 c224,224,230,231 c222,230,235,235 c232,235,236,238 c232,234,252,254 r252,252,253,259 r244,245,249,253 c243,247,249,253".split(" ");
var V1=[589,587,590,576,584,587,590,597,596,598,598,588,589,594,595,597,594,596,599,590,597,591,595,597,594,584,582,586,579,586,588,589,588,587,585,579,586,588,592,587,586,588,588,594,588,592,587,581,568,578,578,565,559,570,557,556,508,500,519,546,547,508,530,502,497,497,529,511,530,545,530,510,535,540,530,525,540,525,545,550,520,510,535,530,540,516,540,530,525,550,530,520,540,545,540,525,545,555,540,550,555,565,552];
var V2=[581,584,571,587,588,589,592,592,589,588,588,574,580,586,588,586,584,577,581,583,579,577,582,572,555,574,568,569,571,578,572,573,584,585,582,584,585,584,580,592,595,593,592,592,587,577,588,588,594,588,592,595,593];
var H=[-5,-5,-4,-1,5,6,5,3,1,-1,-1,1,1,-1,-1,-4,-5,-6,-7,-7,-8,-8,-9,-10,-9,-6,-1,5,8,9,10,11,12,14,14,14,13,12,11,10,10,11,10,9,8,7,8,11,15,16,17,18,19,17,17,21,26,31,29,29,29,29,29,30,27,19,9,7,6,4,3,3,2,1,-1,-2,-3,-3,-2,2,4,6,8,10,12,14,15,14,12,10,8,6,5,3,2,-2,-4,-6,-8,-10,-12,-10,-6,6,5,3,2,1,-1,-2,-5,-8,-10,-12,-12,-10,-7,-3,2,5,8,10,12,14,16,17,18,18,17,16,15,14,14,15,16,17,18,18,17,16,14,12,10,8,6,4,3,1,-2,-5,-8,-10,-12,-13,-12,-10,-8,-5,-3,-2,-1,-1,-1,1,1,-1,-10,-12,-16,-16,-13,-11,-9,-6,-3,-1,6,11,12,13,15,13,14,13,13,11,12,13,15,17,18,19,19,18,17,15,10,6,4,3,-1,-2,-5,-9,-11,-12,-13,-12,-10,-6,-1,1,1,2,-1,-2,-2,-3,-1];
var Dm=[0,1,2,5,6,8,9,10,11,12,14,15,16,17,18,22,25,28,30,31,32,33,34,35,36,38,40,44,45,50,53,54,55,56,58,60,62,68,69,70,71,77,82,83,84,86,89,94,95,96,97,98,102,103,106,107,108,109,115,122,129,130,131,132,135,141,148,156,162,163,169,180,189,190,192,195,196,197,198,204,206,207,210,211,214];
var rp="",cf="",cw="",cm="",dm="",hr="",hg="";
function X(i){return Math.round(26.33+7*i)+.5}
D.forEach(function(s,i){var t=s[0],a=s.slice(1).split(",").map(Number),x=X(i),h=a[0],o=a[1],b=a[2],l=a[3];
 var w="M"+x+" "+h+"V"+(l+1);
 if(t=="r"){rp+=w;if(b-o<=2)rp+="M"+(x-2.5)+" "+(o+.5)+"h5";else rp+="M"+(x-2)+" "+(o+.5)+"h4v"+(b-o)+"h-4z";}
 else{cw+=w;if(b-o<=2)cw+="M"+(x-2.5)+" "+(o+.5)+"h5";else cf+="M"+(x-2.5)+" "+o+"h5v"+(b-o)+"h-5z";}
 var v=i<V1.length?V1[i]:(i>=165&&i-165<V2.length?V2[i-165]:0);
 if(i==218)v=0;
 if(v){if(t=="r")rp+="M"+(x-2)+" "+(v+.5)+"h4V621.500h-4z";else cf+="M"+(x-2.5)+" "+v+"h5V621h-5z";}
 var q=H[i]||0;if(q>0)hr+="M"+x+" 727V"+(727-q);else if(q<0)hg+="M"+x+" 728V"+(728-q);
});
Dm.forEach(function(i){var x=X(i);dm+="M"+x+" 89.500l4.500 4.500-4.500 4.500-4.500-4.500z"});
document.getElementById("cd").innerHTML='<path d="'+dm+'" fill="#2e9dc8" shape-rendering="geometricPrecision"/><path d="'+hr+'" stroke="#ff3232"/><path d="'+hg+'" stroke="#00d800"/><path d="'+cf+'" fill="#54fcfc"/><path d="'+cw+'" stroke="#54fcfc"/><path d="'+rp+'" stroke="#ff3232"/>';
</script>
</body></html>
